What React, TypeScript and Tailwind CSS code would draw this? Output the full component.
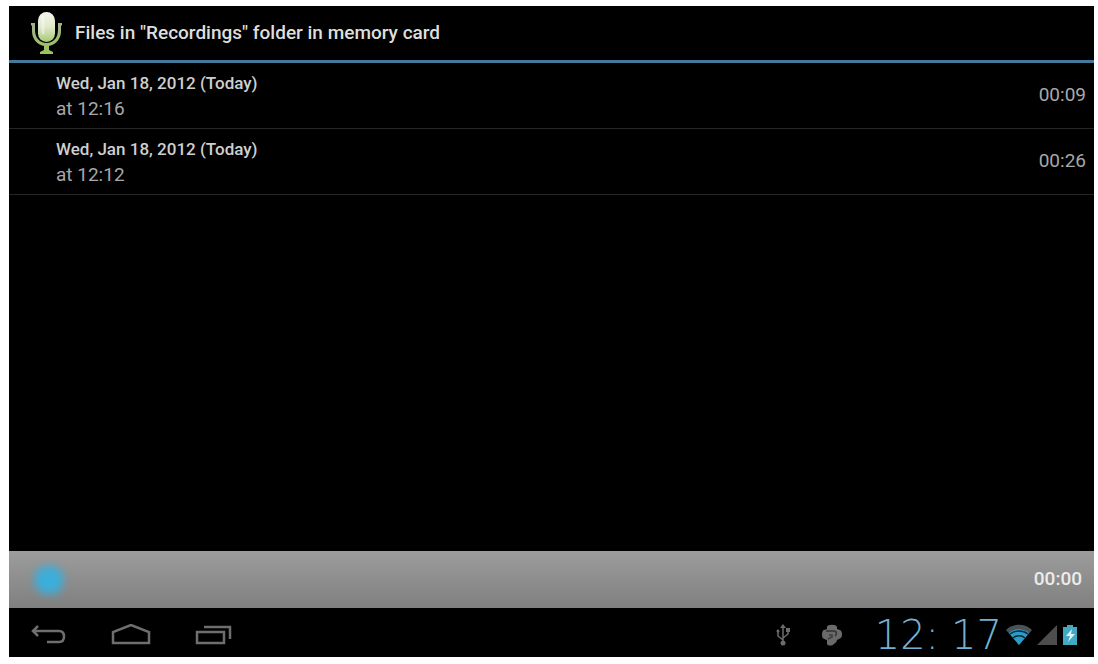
const recordings = [
  { id: 1, date: 'Wed, Jan 18, 2012 (Today)', time: 'at 12:16', length: '00:09' },
  { id: 2, date: 'Wed, Jan 18, 2012 (Today)', time: 'at 12:12', length: '00:26' },
]

function MicIcon() {
  return (
    <svg viewBox="0 0 32 44" className="w-8 h-11" aria-hidden="true">
      <defs>
        <linearGradient id="mic" x1="0" y1="0" x2="0" y2="1">
          <stop offset="0" stopColor="#f4f7ee" />
          <stop offset="0.5" stopColor="#dfe9c8" />
          <stop offset="1" stopColor="#a9c878" />
        </linearGradient>
        <linearGradient id="stand" x1="0" y1="0" x2="0" y2="1">
          <stop offset="0" stopColor="#a3b18c" />
          <stop offset="1" stopColor="#9cc45c" />
        </linearGradient>
      </defs>
      <rect x="7" y="1" width="17" height="30" rx="8.5" fill="url(#mic)" />
      <path d="M0 12h4v7c0 8 5 13 11.5 13S27 27 27 19v-7h4v2l-1 1v5c0 8-5 13.5-12 15v4l4 2v2H9v-2l4-2v-4C6 33.5 1 28 1 20v-5l-1-1z" fill="url(#stand)" />
      <path d="M12 6v16" stroke="#ffffff" strokeOpacity="0.4" strokeWidth="3" strokeLinecap="round" />
    </svg>
  )
}

function BackIcon() {
  return (
    <svg viewBox="0 0 36 22" className="w-9 h-[22px]" fill="none" stroke="#6e6e6e" strokeWidth="2.5" aria-hidden="true">
      <path d="M7 2 2 7l5 5M2 7h26c3 0 5 2 5 5.5S31 18 28 18H16" />
    </svg>
  )
}

function HomeIcon() {
  return (
    <svg viewBox="0 0 40 22" className="w-10 h-[22px]" fill="none" stroke="#6e6e6e" strokeWidth="2.5" aria-hidden="true">
      <path d="M2 19V8l18-7 18 7v11z" />
    </svg>
  )
}

function RecentIcon() {
  return (
    <svg viewBox="0 0 38 22" className="w-[38px] h-[22px]" fill="none" stroke="#6e6e6e" strokeWidth="2.5" aria-hidden="true">
      <path d="M2 8h27v11H2zM9 3h26v12" />
    </svg>
  )
}

function UsbIcon() {
  return (
    <svg viewBox="0 0 16 24" className="w-4 h-6" fill="none" stroke="#6c6c6c" strokeWidth="1.5" aria-hidden="true">
      <path d="M8 3v17M8 17l-5-4V8M8 15l5-4V7" />
      <path d="M5 5l3-4 3 4z" fill="#6c6c6c" stroke="none" />
      <circle cx="8" cy="20" r="2.5" fill="#6c6c6c" stroke="none" />
      <circle cx="3" cy="8" r="1.5" fill="#6c6c6c" stroke="none" />
      <path d="M11 5h4v4h-4z" fill="#6c6c6c" stroke="none" />
    </svg>
  )
}

function DebugIcon() {
  return (
    <svg viewBox="0 0 22 24" className="w-[22px] h-6" aria-hidden="true">
      <path d="M6 4c0-3 10-3 10 0v2l3 1c2 1 2 3 2 5s-1 3-3 4l-2 1c0 2-2 3-3 4-2 2-6 2-7 0V17l-3-1c-2-1-2-3-2-5s1-4 2-4l3-1z" fill="#6a6a6a" />
      <path d="M5 8h8c3 0 3 4 1 5" fill="none" stroke="#333333" strokeWidth="1.5" />
      <path d="M8 12h3v2l-4 2" fill="none" stroke="#3d3d3d" strokeWidth="1.5" />
    </svg>
  )
}

function WifiIcon() {
  return (
    <svg viewBox="0 0 26 22" className="w-[26px] h-[22px]" aria-hidden="true">
      <path d="M0 6C7-1 19-1 26 6L13 21z" fill="#4a5258" />
      <path d="M3 9C9 4 17 4 23 9L13 21z" fill="#2b9cc8" />
      <path d="M4 10c5-4 13-4 18 0M7 14c3-3 9-3 12 0" fill="none" stroke="#0a2a38" strokeWidth="1.5" />
    </svg>
  )
}

function SignalIcon() {
  return (
    <svg viewBox="0 0 22 22" className="w-[22px] h-[22px]" aria-hidden="true">
      <path d="M21 1v20H1z" fill="#4d4d4d" />
    </svg>
  )
}

function BatteryIcon() {
  return (
    <svg viewBox="0 0 16 22" className="w-4 h-[22px]" aria-hidden="true">
      <path d="M1 3h4V1h6v2h4v18H1z" fill="#43a9c2" />
      <path d="M10 5 4 12h4l-2 6 7-8H9z" fill="#d5f6fb" />
    </svg>
  )
}

export default function App() {
  return (
    <div className="h-screen bg-white pt-[6px] pr-1 pb-[7px] pl-[9px] font-['Roboto','Liberation_Sans',sans-serif]">
      <div className="h-full flex flex-col bg-black">
        <header className="h-[57px] shrink-0 flex items-center gap-3 pl-[22px] border-b-3 border-[#43799a]">
          <MicIcon />
          <h1 className="text-[19px] font-medium text-[#dedede]">Files in "Recordings" folder in memory card</h1>
        </header>

        <ul className="flex-1 min-h-0 overflow-auto">
          {recordings.map((rec) => (
            <li key={rec.id} className="border-b border-[#262626]">
              <button className="w-full h-[65px] pl-[47px] pr-2 flex items-center justify-between text-left">
                <span className="flex flex-col">
                  <span className="text-[17px] leading-[25px] font-medium text-[#cfcfcf]">{rec.date}</span>
                  <span className="text-[19px] leading-[25px] text-[#a8a8a8]">{rec.time}</span>
                </span>
                <span className="text-[19px] text-[#a8a8a8]">{rec.length}</span>
              </button>
            </li>
          ))}
        </ul>

        {/* Player bar */}
        <div className="h-[57px] shrink-0 flex items-center justify-between pl-[22px] pr-3 bg-linear-to-b from-[#9c9c9c] to-[#808080]">
          <button aria-label="Stop" className="p-1">
            <span className="block size-7 rounded-xl bg-[#3baedb] blur-[4px]" />
          </button>
          <span className="text-[19px] font-medium text-[#ececec]">00:00</span>
        </div>

        {/* System bar */}
        <nav className="h-[49px] shrink-0 flex items-center justify-between pt-1 pl-[22px] pr-4">
          <div className="flex items-center gap-11">
            <button aria-label="Back"><BackIcon /></button>
            <button aria-label="Home"><HomeIcon /></button>
            <button aria-label="Recent apps"><RecentIcon /></button>
          </div>
          <div className="flex items-center">
            <div className="flex items-center gap-[30px] mr-8">
              <UsbIcon />
              <DebugIcon />
            </div>
            <time className="flex gap-3 mr-1 font-['DejaVu_Sans',sans-serif] font-extralight text-[40px] leading-[44px] text-[#72b1d3]">
              <span>12:</span>
              <span>17</span>
            </time>
            <div className="flex items-center gap-1">
              <WifiIcon />
              <SignalIcon />
              <BatteryIcon />
            </div>
          </div>
        </nav>
      </div>
    </div>
  )
}
